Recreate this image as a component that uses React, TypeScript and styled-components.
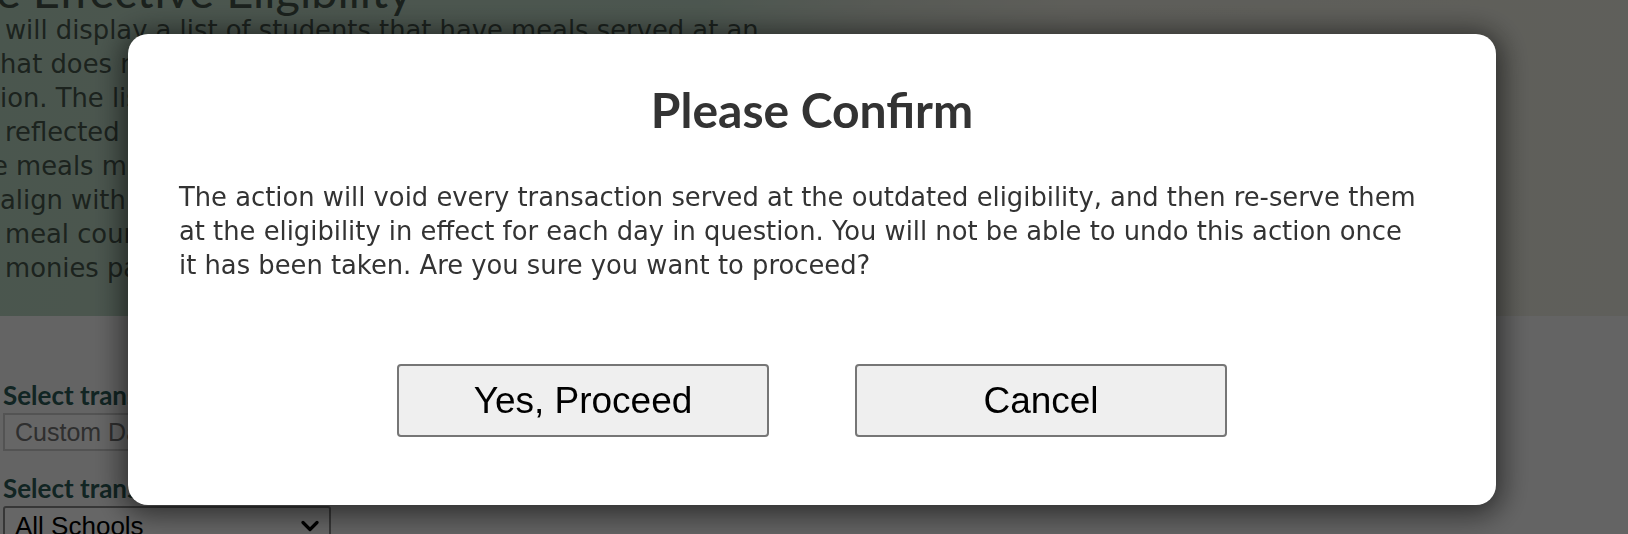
////////////////////////////////////////////////////
//////////////////// COMPONENT /////////////////////
////////////////////////////////////////////////////

import styled, { createGlobalStyle } from "styled-components";

const introLines: IIntroLine[] = [
   { text: "will display a list of students that have meals served at an", indent: 5 },
   { text: "hat does not match the eligibility in effect on the date of the", indent: 0 },
   { text: "ion. The list is built from every point of sale transaction", indent: 0 },
   { text: "reflected in the selected date range for the selected sites.", indent: 5 },
   { text: "e meals may need to be re-served so that claims will", indent: -8 },
   { text: "align with the eligibility on file for each student and day.", indent: 0 },
   { text: "meal counts and reimbursement totals, along with any", indent: 5 },
   { text: "monies paid, will be updated once the action is taken.", indent: 5 },
];

export default function App() {

   return (
      <>
         <GlobalStyle />
         <Page>
            <Header>
               <Heading>e Effective Eligibility</Heading>
               <Intro>
                  {introLines.map((line) => (
                     <IntroLine key={line.text} $indent={line.indent}>{line.text}</IntroLine>
                  ))}
               </Intro>
            </Header>
            <Filters>
               <Label>Select transaction date range</Label>
               <TextInput placeholder="Custom Date Range" readOnly />
               <Label $gap>Select transaction school</Label>
               <SelectBox>
                  <span>All Schools</span>
                  <svg width="18" height="12" viewBox="0 0 18 12" fill="none">
                     <path d="M2 2.5L9 9.5L16 2.5" stroke="#000" strokeWidth="3.2" strokeLinecap="round" strokeLinejoin="round" />
                  </svg>
               </SelectBox>
            </Filters>
         </Page>

         <Overlay>
            <Dialog role="dialog" aria-modal="true">
               <Title>Please Confirm</Title>
               <Message>
                  The action will void every transaction served at the outdated eligibility, and then re-serve them<br />
                  at the eligibility in effect for each day in question. You will not be able to undo this action once<br />
                  it has been taken. Are you sure you want to proceed?
               </Message>
               <Actions>
                  <ActionButton type="button">Yes, Proceed</ActionButton>
                  <ActionButton type="button">Cancel</ActionButton>
               </Actions>
            </Dialog>
         </Overlay>
      </>
   );
}
////////////////////////////////////////////////////
/////////////// COMPONENT PROP TYPES ///////////////
////////////////////////////////////////////////////

interface IIntroLine {
   text: string;
   indent: number;
}
////////////////////////////////////////////////////
//////////////// STYLED COMPONENTS /////////////////
////////////////////////////////////////////////////

const GlobalStyle = createGlobalStyle`
   html, body {
      margin: 0;
      padding: 0;
      overflow: hidden;
      background: #fafafa;
   }
   * {
      box-sizing: border-box;
   }
`;
const Page = styled.div`
   width: 1628px;
   height: 534px;
   overflow: hidden;
   font-family: Lato, "Open Sans", sans-serif;
`;
const Header = styled.header`
   height: 316px;
   overflow: hidden;
   background: linear-gradient(100deg, #bad6c3 0%, #bfd8c7 42%, #d9e0d4 52%, #ebebe0 64%, #eeeee3 100%);
`;
const Heading = styled.h1`
   margin: -38px 0 0 -4px;
   font-size: 47px;
   line-height: 56px;
   font-weight: 400;
   color: #44544a;
   white-space: nowrap;
`;
const Intro = styled.div`
   margin-top: -5px;
   font-family: "DejaVu Sans", Verdana, sans-serif;
   font-size: 25.8px;
   line-height: 34px;
   color: #47574d;
`;
const IntroLine = styled.div<{ $indent: number }>`
   padding-left: ${(props) => Math.max(props.$indent, 0)}px;
   margin-left: ${(props) => Math.min(props.$indent, 0)}px;
   white-space: nowrap;
`;
const Filters = styled.section`
   display: flex;
   flex-direction: column;
   align-items: flex-start;
   padding: 64px 0 0 3px;
`;
const Label = styled.label<{ $gap?: boolean }>`
   margin-top: ${(props) => (props.$gap ? "22px" : "0")};
   margin-bottom: 2px;
   font-size: 26px;
   line-height: 31px;
   font-weight: 700;
   color: #2d5c57;
   white-space: nowrap;
`;
const TextInput = styled.input`
   width: 328px;
   height: 38px;
   padding: 0 10px;
   border: 2px solid #cfcfcf;
   background: #fff;
   font-family: "Liberation Sans", Arial, sans-serif;
   font-size: 25px;
   outline: none;
   ::placeholder {
      color: #b0b0b0;
   }
`;
const SelectBox = styled.div`
   display: flex;
   align-items: center;
   justify-content: space-between;
   width: 328px;
   height: 40px;
   padding: 0 10px 0 10px;
   border: 2px solid #8a8a8a;
   border-radius: 3px;
   background: #fff;
   font-family: "Liberation Sans", Arial, sans-serif;
   font-size: 26px;
   color: #000;
`;
const Overlay = styled.div`
   position: fixed;
   inset: 0;
   display: flex;
   justify-content: center;
   align-items: flex-start;
   padding: 34px 4px 0 0;
   background: rgba(0, 0, 0, 0.6);
`;
const Dialog = styled.div`
   display: flex;
   flex-direction: column;
   align-items: center;
   width: 1368px;
   height: 471px;
   padding: 47px 51px 0;
   border-radius: 20px;
   background: #fff;
   box-shadow: 0 4px 28px 6px rgba(0, 0, 0, 0.55);
   font-family: Lato, "Open Sans", sans-serif;
   color: #333;
`;
const Title = styled.h2`
   margin: 0;
   font-size: 48px;
   line-height: 58px;
   font-weight: 700;
`;
const Message = styled.p`
   align-self: stretch;
   margin: 41px 0 0;
   font-family: "DejaVu Sans", Verdana, sans-serif;
   font-size: 25.8px;
   line-height: 34px;
   white-space: nowrap;
`;
const Actions = styled.div`
   display: flex;
   gap: 86px;
   margin-top: 82px;
`;
const ActionButton = styled.button`
   width: 372px;
   height: 73px;
   border: 2px solid #767676;
   border-radius: 4px;
   background: #efefef;
   font-family: "Liberation Sans", Arial, sans-serif;
   font-size: 37px;
   color: #000;
   cursor: pointer;
`;
